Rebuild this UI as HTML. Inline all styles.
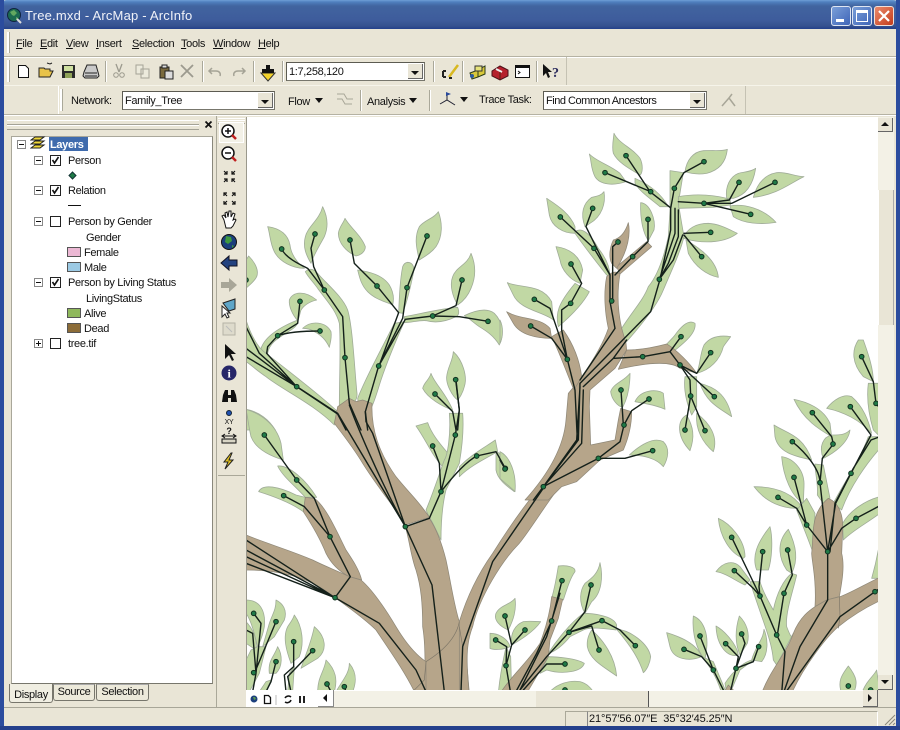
<!DOCTYPE html>
<html><head><meta charset="utf-8"><title>Tree.mxd - ArcMap - ArcInfo</title>
<style>
html,body{margin:0;padding:0;background:#e9e5d6}
#w{position:relative;width:900px;height:730px;overflow:hidden;background:#e9e5d6;font-family:"Liberation Sans",sans-serif;font-size:11px;color:#111;letter-spacing:-.33px}
.a{position:absolute}
.t{position:absolute;white-space:nowrap;line-height:14px;height:14px}
.leaf path{fill:#c1d8a4;stroke:#a0ac98;stroke-width:2.4;stroke-linejoin:round}
.br path{fill:#b6a58a;stroke:#8f8878;stroke-width:2.2;stroke-linejoin:round}
.ln{fill:none;stroke:#14201a;stroke-width:4.2;stroke-linejoin:round;stroke-linecap:round}
.nb{fill:none;stroke:#12301f;stroke-width:17;stroke-linecap:round}
.ng{fill:none;stroke:#1f7a47;stroke-width:11;stroke-linecap:round}
.thin{fill:none;stroke:#7d7668;stroke-width:2}
.combo{position:absolute;background:#fff;border:1px solid #77766c;border-top-color:#5c5b52;border-left-color:#5c5b52;box-sizing:border-box;height:19px}
.cbtn{position:absolute;right:1px;top:1px;bottom:1px;width:15px;background:#e9e5d6;border-right:1px solid #666;border-bottom:1px solid #666;box-sizing:border-box}
.cbtn:after{content:"";position:absolute;left:3px;top:7px;border:4px solid transparent;border-top:4px solid #111;border-bottom:0}
.sep{position:absolute;width:1px;background:#aaa899;border-right:1px solid #fff}
.tri{position:absolute;border:4.5px solid transparent;border-top:5px solid #111;border-bottom:0}
.ex{position:absolute;width:9px;height:9px;border:1px solid #888;box-sizing:border-box;background:#fff}
.ex:before{content:"";position:absolute;left:1px;top:3px;width:5px;height:1px;background:#111}
.ex.p:after{content:"";position:absolute;left:3px;top:1px;width:1px;height:5px;background:#111}
.cb{position:absolute;width:11px;height:11px;border:1px solid #222;box-sizing:border-box;background:#fff}
.sw{position:absolute;width:14px;height:10px;border:1px solid #555;box-sizing:border-box}
.tab{position:absolute;background:#ece9da;border:1px solid #77766c;border-top-color:#aaa;border-radius:0 0 3px 3px;box-sizing:border-box;text-align:center;line-height:15px}
u{text-decoration:underline}
</style></head><body>
<div id="w">

<!-- title bar -->
<div class="a" style="left:0;top:0;width:900px;height:29px;background:linear-gradient(#6f9fd6 0,#4f7fbe 2px,#41649f 6px,#3e5c9c 20px,#35518f 26px,#23408c 29px);border-radius:7px 7px 0 0"></div>
<div class="a" style="left:0;top:0;width:4px;height:730px;background:#2b4c9e"></div>
<div class="a" style="left:896px;top:0;width:4px;height:730px;background:#2b4c9e"></div>
<div class="a" style="left:0;top:726px;width:900px;height:4px;background:#24408c"></div>
<div class="t" style="left:25px;top:9px;color:#f0f2f8;font-size:13px;letter-spacing:.2px">Tree.mxd - ArcMap - ArcInfo</div>
<svg class="a" style="left:5px;top:7px" width="18" height="18" viewBox="0 0 18 18"><circle cx="9" cy="8" r="6.5" fill="#1c6a50" stroke="#10233f"/><path d="M5 5l4-2 3 3-3 3-2-1zM11 10l2 1-2 2z" fill="#62a860"/><path d="M12 12l4 4" stroke="#ddd" stroke-width="2"/></svg>
<!-- window buttons -->
<div class="a" style="left:831px;top:6px;width:20px;height:20px;border:1px solid #dfe6f2;border-radius:3px;box-sizing:border-box;background:linear-gradient(135deg,#7a9fd8,#3f65b8)"><div class="a" style="left:4px;top:12px;width:8px;height:3px;background:#fff"></div></div>
<div class="a" style="left:852px;top:6px;width:20px;height:20px;border:1px solid #dfe6f2;border-radius:3px;box-sizing:border-box;background:linear-gradient(135deg,#7a9fd8,#3f65b8)"><div class="a" style="left:3px;top:3px;width:12px;height:12px;border:1px solid #fff;border-top-width:3px;box-sizing:border-box"></div></div>
<div class="a" style="left:874px;top:6px;width:20px;height:20px;border:1px solid #efe0da;border-radius:3px;box-sizing:border-box;background:linear-gradient(135deg,#e98a6c,#c43c1c)"><svg class="a" style="left:3px;top:3px" width="12" height="12"><path d="M1 1l10 10M11 1L1 11" stroke="#fff" stroke-width="2.2"/></svg></div>

<!-- menu bar -->
<div class="a" style="left:4px;top:29px;width:892px;height:27px;background:#e9e5d6"></div>
<div class="a" style="left:7px;top:32px;width:2px;height:21px;background:#fff;border-right:1px solid #aaa899"></div>
<div class="t" style="left:16px;top:37px"><u>F</u>ile</div>
<div class="t" style="left:40px;top:37px"><u>E</u>dit</div>
<div class="t" style="left:66px;top:37px"><u>V</u>iew</div>
<div class="t" style="left:96px;top:37px"><u>I</u>nsert</div>
<div class="t" style="left:132px;top:37px"><u>S</u>election</div>
<div class="t" style="left:181px;top:37px"><u>T</u>ools</div>
<div class="t" style="left:213px;top:37px"><u>W</u>indow</div>
<div class="t" style="left:258px;top:37px"><u>H</u>elp</div>
<div class="a" style="left:4px;top:56px;width:892px;height:1px;background:#b5b2a3"></div>
<div class="a" style="left:4px;top:57px;width:892px;height:1px;background:#fff"></div>

<!-- toolbar 1 -->
<div class="a" style="left:566px;top:57px;width:1px;height:28px;background:#c5c2b3"></div>
<div class="a" style="left:7px;top:60px;width:2px;height:22px;background:#fff;border-right:1px solid #aaa899"></div>
<div class="a" style="left:4px;top:85px;width:892px;height:1px;background:#f6f4ea"></div>
<svg class="a" style="left:0;top:57px" width="570" height="28" viewBox="0 57 570 28">
<path d="M18.500 65.500h7l3 3v9h-10z" fill="#fff" stroke="#111"/>
<path d="M39 77V68h5l1 1h5v2h3l-3 6z" fill="#e8c34a" stroke="#222"/><path d="M47 63l3 1 2-1" fill="none" stroke="#222"/>
<path d="M62 65h13v13H62z" fill="#2b2b2b"/><path d="M64 66h9v5h-9z" fill="#cfe0a0"/><path d="M65 73h7v5h-7z" fill="#8fa258"/>
<path d="M84 72l3-7h9l2 7 1 4-2 2H85l-2-2z" fill="#c9c9c9" stroke="#222"/><path d="M85 73h12M85 76h12" stroke="#222"/>
<path d="M116 64l3 8m3-8l-3 8" stroke="#9c9a8e" stroke-width="1.300" fill="none"/><circle cx="116" cy="75" r="2.300" fill="none" stroke="#9c9a8e"/><circle cx="122" cy="75" r="2.300" fill="none" stroke="#9c9a8e"/>
<path d="M136 65h7v9h-7zM141 69h8v9h-8z" fill="#eceadc" stroke="#a5a396"/>
<path d="M160 67h9v11h-9z" fill="#7a6a3e" stroke="#222"/><path d="M162 65h5v3h-5z" fill="#ddd" stroke="#222"/><path d="M165 71h8v8h-8z" fill="#dcdcdc" stroke="#222"/>
<path d="M181 65l12 12M193 65l-12 12" stroke="#9c9a8e" stroke-width="1.800"/>
<path d="M212 68l-3 3 3 3m-3-3h7c3 0 5 2 4 5" fill="none" stroke="#a5a396" stroke-width="1.500"/>
<path d="M242 68l3 3-3 3m3-3h-7c-3 0-5 2-4 5" fill="none" stroke="#a5a396" stroke-width="1.500"/>
<path d="M261 73l7 8 7-8z" fill="#f2d22c" stroke="#333"/><path d="M266 65h4v4h4v4h-12v-4h4z" fill="#111"/>
<path d="M449 77l9-12" stroke="#d8b820" stroke-width="2.500"/><path d="M443 71h3M443 77h3M449 78h3M443 71v6" stroke="#222" stroke-width="2"/>
<path d="M470 73l8-3v7l-6 2zM478 70l7-4v8l-7 3z" fill="#d8c83a" stroke="#2a3a18"/><path d="M475 66h7v5h-7z" fill="#e6e27a" stroke="#333"/><circle cx="472" cy="76" r="2" fill="#2c5aa0"/>
<path d="M492 71l8-5 8 4v6l-8 4-8-4z" fill="#b5202c" stroke="#4a1018"/><path d="M496 69l6 3" stroke="#eee" stroke-width="2"/><path d="M500 72v7" stroke="#521" />
<path d="M515.500 65.500h14v12h-14z" fill="#fff" stroke="#111"/><path d="M515 65h15v3h-15z" fill="#111"/><path d="M518 71l2 1.500-2 1.500" fill="none" stroke="#111"/>
<path d="M543 64v12l3-3 2 5 2-1-2-5h4z" fill="#111"/><text x="552" y="77" font-family="Liberation Serif,serif" font-weight="bold" font-size="14" fill="#2a2a5c">?</text>
</svg>
<div class="sep" style="left:105px;top:61px;height:21px"></div>
<div class="sep" style="left:202px;top:61px;height:21px"></div>
<div class="sep" style="left:253px;top:61px;height:21px"></div>
<div class="sep" style="left:282px;top:61px;height:21px"></div>
<div class="sep" style="left:433px;top:61px;height:21px"></div>
<div class="sep" style="left:462px;top:61px;height:21px"></div>
<div class="sep" style="left:536px;top:61px;height:21px"></div>
<div class="combo" style="left:286px;top:62px;width:139px"><div class="t" style="left:2px;top:2px">1:7,258,120</div><div class="cbtn"></div></div>

<!-- toolbar 2 -->
<div class="a" style="left:58px;top:86px;width:1px;height:28px;background:#fff"></div>
<div class="a" style="left:745px;top:86px;width:1px;height:28px;background:#c5c2b3"></div>
<div class="a" style="left:60px;top:89px;width:2px;height:22px;background:#fff;border-right:1px solid #aaa899"></div>
<div class="t" style="left:71px;top:94px">Network:</div>
<div class="combo" style="left:122px;top:91px;width:153px"><div class="t" style="left:2px;top:2px">Family_Tree</div><div class="cbtn"></div></div>
<div class="t" style="left:288px;top:95px">Flow</div><div class="tri" style="left:315px;top:98px"></div>
<svg class="a" style="left:336px;top:91px" width="18" height="18"><path d="M1 3h7l3 5h6M1 8h5l3 5h7" fill="none" stroke="#a8a698"/></svg>
<div class="sep" style="left:360px;top:90px;height:21px"></div>
<div class="t" style="left:367px;top:95px">Analysis</div><div class="tri" style="left:409px;top:98px"></div>
<div class="sep" style="left:429px;top:90px;height:21px"></div>
<svg class="a" style="left:438px;top:91px" width="20" height="18"><path d="M2 13l7-4 8 5M9 9V3" stroke="#223" fill="none"/><path d="M8 1l5 2-5 2z" fill="#2a4a9c"/></svg>
<div class="tri" style="left:460px;top:97px"></div>
<div class="t" style="left:479px;top:93px">Trace Task:</div>
<div class="combo" style="left:543px;top:91px;width:164px"><div class="t" style="left:2px;top:2px;letter-spacing:-.48px">Find Common Ancestors</div><div class="cbtn"></div></div>
<svg class="a" style="left:720px;top:92px" width="17" height="17"><path d="M2 14L9 6l6 8M9 6l3-4" stroke="#a8a698" stroke-width="1.500" fill="none"/></svg>
<div class="a" style="left:4px;top:114px;width:892px;height:1px;background:#b5b2a3"></div>
<div class="a" style="left:4px;top:115px;width:892px;height:1px;background:#fff"></div>

<!-- TOC -->
<div class="a" style="left:7px;top:120px;width:192px;height:3px;border-top:1px solid #fff;border-bottom:1px solid #a5a396"></div>
<div class="a" style="left:7px;top:125px;width:192px;height:3px;border-top:1px solid #fff;border-bottom:1px solid #a5a396"></div>
<svg class="a" style="left:204px;top:120px" width="9" height="9"><path d="M1.500 1.500l6 6M7.500 1.500l-6 6" stroke="#111" stroke-width="1.800"/></svg>
<div class="a" style="left:11px;top:136px;width:202px;height:548px;background:#fff;border:1px solid #a9a79a;border-right-color:#8a887c;border-bottom-color:#77766c;box-sizing:border-box"></div>
<div class="a" style="left:216px;top:116px;width:1px;height:592px;background:#aaa899"></div>
<div class="ex" style="left:17px;top:140px"></div>
<svg class="a" style="left:30px;top:136px" width="16" height="15"><path d="M1 4l4-3h9l-4 3zM1 8l4-3h9l-4 3zM1 12l4-3h9l-4 3z" fill="#f0d838" stroke="#222"/></svg>
<div class="a" style="left:49px;top:137px;width:39px;height:14px;background:#3f6bad"></div>
<div class="t" style="left:50px;top:138px;color:#fff;font-weight:bold">Layers</div>

<div class="ex" style="left:34px;top:156px"></div><div class="cb" style="left:50px;top:155px"><svg width="9" height="9" style="display:block"><path d="M1.500 4l2 3 4-6" fill="none" stroke="#111" stroke-width="1.600"/></svg></div>
<div class="t" style="left:68px;top:154px">Person</div>
<svg class="a" style="left:68px;top:171px" width="9" height="9"><path d="M4.500 1l3.500 3.500-3.500 3.500-3.500-3.500z" fill="#1f7a47" stroke="#133"/></svg>
<div class="ex" style="left:34px;top:186px"></div><div class="cb" style="left:50px;top:185px"><svg width="9" height="9" style="display:block"><path d="M1.500 4l2 3 4-6" fill="none" stroke="#111" stroke-width="1.600"/></svg></div>
<div class="t" style="left:68px;top:184px">Relation</div>
<div class="a" style="left:68px;top:205px;width:13px;height:1px;background:#111"></div>
<div class="ex" style="left:34px;top:217px"></div><div class="cb" style="left:50px;top:216px"></div>
<div class="t" style="left:68px;top:215px">Person by Gender</div>
<div class="t" style="left:86px;top:231px">Gender</div>
<div class="sw" style="left:67px;top:247px;background:#ecb8d4"></div><div class="t" style="left:84px;top:246px">Female</div>
<div class="sw" style="left:67px;top:262px;background:#9ccae4"></div><div class="t" style="left:84px;top:261px">Male</div>
<div class="ex" style="left:34px;top:278px"></div><div class="cb" style="left:50px;top:277px"><svg width="9" height="9" style="display:block"><path d="M1.500 4l2 3 4-6" fill="none" stroke="#111" stroke-width="1.600"/></svg></div>
<div class="t" style="left:68px;top:276px">Person by Living Status</div>
<div class="t" style="left:86px;top:292px">LivingStatus</div>
<div class="sw" style="left:67px;top:308px;background:#8fb85c"></div><div class="t" style="left:84px;top:307px">Alive</div>
<div class="sw" style="left:67px;top:323px;background:#8c6c38"></div><div class="t" style="left:84px;top:322px">Dead</div>
<div class="ex p" style="left:34px;top:339px"></div><div class="cb" style="left:50px;top:338px"></div>
<div class="t" style="left:68px;top:337px">tree.tif</div>

<!-- tabs -->
<div class="tab" style="left:9px;top:684px;width:44px;height:19px;background:#f0eee2;border-top:0;line-height:22px;z-index:2">Display</div>
<div class="tab" style="left:53px;top:684px;width:42px;height:17px">Source</div>
<div class="tab" style="left:96px;top:684px;width:53px;height:17px">Selection</div>

<!-- vertical toolbar -->
<div class="a" style="left:218px;top:118px;width:27px;height:1px;background:#fff"></div>
<div class="a" style="left:218px;top:120px;width:27px;height:2px;border-top:1px solid #fff;border-bottom:1px solid #aaa899"></div>
<div class="a" style="left:219px;top:122px;width:25px;height:21px;background:#f3f1e7;border:1px solid #fff;box-sizing:border-box"></div>
<div class="a" style="left:218px;top:475px;width:27px;height:1px;background:#aaa899"></div>
<svg class="a" style="left:218px;top:118px" width="27" height="360" viewBox="218 118 27 360">
<circle cx="228" cy="131" r="6" fill="#fff" stroke="#111" stroke-width="1.500"/><path d="M225 131h6M228 128v6" stroke="#111" stroke-width="1.500"/><path d="M232 135l4 4" stroke="#c02020" stroke-width="2.500"/>
<circle cx="228" cy="153" r="6" fill="#fff" stroke="#111" stroke-width="1.500"/><path d="M225 153h6" stroke="#111" stroke-width="1.500"/><path d="M232 157l4 4" stroke="#c02020" stroke-width="2.500"/>
<path d="M224 171l3 3m0-3v3h-3M235 171l-3 3m0-3v3h3M224 182l3-3m0 3v-3h-3M235 182l-3-3m0 3v-3h3" stroke="#111" fill="none" stroke-width="1.200"/>
<path d="M227 196l-3-3m0 3v-3h3M232 196l3-3m0 3v-3h-3M227 201l-3 3m0-3v3h3M232 201l3 3m0-3v3h-3" stroke="#111" fill="none" stroke-width="1.200"/>
<path d="M224 220l-2-4 2-1 2 3-1-5 2-1 1 5 1-6 2 0 0 6 2-4 2 1-2 6 2-1 1 1-3 6-2 2h-5z" fill="#fff" stroke="#111"/>
<circle cx="229" cy="242" r="7.500" fill="#1c3f7c" stroke="#111"/><path d="M226 236l5 1 1 4-4 3-3-2zM232 245l2 1-2 2z" fill="#3f9a40"/>
<path d="M221 263l8-7v4h8v6h-8v4z" fill="#23427f" stroke="#112"/>
<path d="M237 285l-8-7v4h-8v6h8v4z" fill="#a8a698"/>
<path d="M223 303l12-4v10l-6 2z" fill="#5fa6c8" stroke="#222"/><path d="M222 306v11l3-3 2 4 2-1-2-4h3z" fill="#fff" stroke="#222"/>
<path d="M223 323h12v12h-12z" fill="#dedbcc" stroke="#b5b3a6"/><path d="M226 326l6 6" stroke="#bbb"/>
<path d="M225 344v15l4-4 3 6 2-1-3-6h5z" fill="#111"/>
<circle cx="229" cy="373" r="7.500" fill="#262668"/><text x="229" y="377.500" text-anchor="middle" font-family="Liberation Serif,serif" font-size="12" font-weight="bold" fill="#fff">i</text>
<path d="M222 402l1-7 2-5h3v5h3v-5h3l2 5 1 7h-6v-4h-3v4z" fill="#111"/>
<circle cx="229" cy="413" r="2.500" fill="#2050b0" stroke="#123"/><text x="229" y="424" text-anchor="middle" font-size="7" fill="#111">XY</text>
<path d="M222 439h14v4h-14zM222 436h14" stroke="#111" fill="#d8d5c5"/><path d="M225 434l-3 2 3 2M233 434l3 2-3 2" stroke="#111" fill="none"/><text x="229" y="434" text-anchor="middle" font-size="9" font-weight="bold" fill="#111">?</text>
<path d="M231 453l-7 9h4l-3 7 8-9h-4l3-7z" fill="#e0c020" stroke="#222"/>
</svg>

<!-- map -->
<svg class="a" style="left:0;top:0" width="900" height="730" viewBox="0 0 900 730">
<defs>
<clipPath id="mc"><rect x="246" y="117" width="632" height="573"/></clipPath>
<path id="n9" d="M107,177h0M207,132h0M235,300h0M312,150h0M393,288h0M297,503h0M543,138h0M483,293h0M648,270h0M560,378h0M726,394h0M398,528h0M162,334h0M95,437h0M222,423h0M152,590h0M567,612h0M629,569h0M0,270h0"/>
<path id="n7" d="M55,165h0M152,300h0M113,347h0M252,470h0M267,653h0M478,440h0M585,335h0M560,198h0M692,228h0M778,265h0M628,165h0M23,700h0M90,725h0M143,785h0M200,812h0M90,845h0M23,878h0M243,912h0M295,920h0"/>
<path id="n8" d="M378,107h0M315,158h0M452,215h0M612,125h0M523,205h0M612,250h0M717,187h0M825,187h0M752,283h0M632,337h0M605,410h0M478,478h0M444,298h0M398,410h0M278,265h0M181,291h0M282,385h0M354,366h0M335,543h0M213,432h0M212,550h0M103,538h0M92,618h0M202,718h0M130,1100h0M295,1015h0M458,992h0M372,915h0M363,810h0M447,837h0M428,710h0M543,650h0M632,698h0M540,735h0M643,830h0M572,828h0M555,930h0M615,932h0M15,1047h0"/>
<path id="n10" d="M457,218h0M519,312h0M397,305h0M480,428h0M571,200h0M573,400h0M402,412h0M354,472h0M440,555h0M503,635h0M588,535h0M605,50h0M648,190h0M645,755h0M215,592h0M223,692h0M308,635h0M383,630h0M372,760h0M300,768h0M350,885h0M120,888h0M72,928h0M160,990h0M245,882h0M197,911h0M296,920h0M228,985h0M565,1038h0M632,1050h0"/>
<path id="n11" d="M45,198h0M105,240h0M17,270h0M48,347h0M216,92h0M185,213h0M303,105h0M237,247h0M336,212h0M436,287h0M327,300h0M225,342h0M225,420h0"/>
</defs>
<rect x="246" y="117" width="632" height="573" fill="#fff"/>
<g clip-path="url(#mc)">
<!-- FILLS -->
<g transform="translate(246,190) scale(.33333)"><g class="leaf">
<path d="M65,110C100,115 125,130 132,165C135,190 150,215 175,235C140,235 100,215 85,185C72,160 72,130 65,110Z"/>
<path d="M230,50C245,80 248,110 235,140C222,165 205,190 195,220C180,195 170,170 178,140C185,110 220,90 230,50Z"/>
<path d="M297,85C310,110 345,135 358,170C358,185 345,195 330,198C300,185 278,160 277,130C280,110 292,100 297,85Z"/>
<path d="M335,240C370,245 410,255 430,285C442,305 445,325 440,345C420,335 390,330 365,305C345,285 340,260 335,240Z"/>
<path d="M577,65C590,100 590,140 570,170C555,190 535,200 520,210C510,170 505,140 520,110C535,90 565,85 577,65Z"/>
<path d="M485,217C500,218 505,230 503,245C495,285 485,330 470,370L458,368C460,320 462,270 470,230C473,222 478,218 485,217Z"/>
<path d="M675,190C690,225 690,260 675,295C665,320 650,335 635,345C620,320 610,285 620,260C630,230 665,225 675,190Z"/>
<path d="M475,380C520,372 590,355 635,352C640,365 640,375 630,380C600,395 570,400 540,392C520,390 495,398 475,398Z"/>
<path d="M655,377C680,365 720,350 745,370C770,395 775,435 760,465C745,440 725,425 700,410C685,400 670,385 655,377Z"/>
<path d="M178,245C190,232 205,238 215,250C240,280 290,320 305,360C320,410 325,530 333,610C335,630 320,645 305,650L280,650C280,560 285,460 280,400C270,360 240,330 215,295C205,280 185,260 178,245Z"/>
<path d="M335,625C360,560 410,470 445,400L475,395C455,440 425,510 405,570C395,600 385,640 370,665L340,665Z"/>
<path d="M130,330C140,305 175,300 212,330C190,335 175,345 165,360C160,375 160,385 155,392C140,375 128,350 130,330Z"/>
<path d="M170,415C195,390 240,395 255,425C258,445 252,460 250,472C240,450 225,435 205,425C195,418 180,415 170,415Z"/>
<path d="M42,490C45,455 80,420 155,390C158,400 150,410 135,420C105,440 70,455 65,490Z"/>
<path d="M0,390C10,420 30,470 60,490C110,530 230,620 280,670L265,705C200,640 110,600 60,560C30,540 10,520 0,515Z"/>
<path d="M8,198C25,215 40,240 32,260C25,275 10,285 0,295L0,210Z"/>
<path d="M0,658C40,665 70,690 88,720L0,720Z"/>
<path d="M555,550C565,580 600,610 620,660C590,650 545,625 530,595C535,575 550,570 555,550Z"/>
<path d="M622,485C650,510 665,560 655,590C650,610 640,625 635,630C620,620 600,585 602,560C605,530 620,515 622,485Z"/>
</g></g>
<g transform="translate(246,380) scale(.33333)"><g class="leaf">
<path d="M0,88C40,100 90,130 105,190L112,240C80,230 30,210 15,170C8,140 5,110 0,88Z"/>
<path d="M95,258C130,255 180,300 212,352L178,352C150,320 110,290 95,258Z"/>
<path d="M38,335C50,310 100,320 150,345L178,352L172,395C130,365 70,345 38,335Z"/>
<path d="M510,138L545,128C560,170 590,200 610,225L590,260C560,230 540,180 510,138Z"/>
<path d="M540,390C565,330 580,280 595,240C605,225 615,160 610,100L650,100C655,160 645,220 640,250L600,330C590,370 585,420 585,480C570,450 560,425 550,412Z"/>
<path d="M640,260C680,220 720,200 748,180L755,215C710,240 670,260 640,290Z"/>
<path d="M750,215C790,230 810,270 805,335C785,320 755,300 750,270Z"/>
<path d="M0,660C40,660 60,690 55,740C50,770 40,790 35,800C25,760 15,720 0,700Z"/>
<path d="M90,660C110,670 125,690 115,720L85,770L50,800L70,730C80,700 90,690 90,660Z"/>
<path d="M0,725C20,745 35,780 30,810L0,790Z"/>
<path d="M145,705C170,740 175,790 160,830L135,850C120,810 110,770 125,740C135,725 140,720 145,705Z"/>
<path d="M205,740C240,770 245,810 215,835L165,865C180,820 195,790 205,740Z"/>
<path d="M95,800C110,825 110,860 90,880L70,880C65,840 85,830 95,800Z"/>
<path d="M240,840C270,870 275,900 265,935L215,935C215,890 235,875 240,840Z"/>
<path d="M310,850C335,880 330,910 320,935L270,935C290,900 310,880 310,850Z"/>
<path d="M15,810L35,800L60,800L40,880L10,935L0,935L0,840Z"/>
<path d="M60,905L75,900L60,935L40,935Z"/>
<path d="M130,880L145,860L140,935L125,935Z"/>
</g></g>
<g transform="translate(500,120) scale(.33333)"><g class="leaf">
<path d="M342,40C355,70 400,85 420,115C430,135 428,160 420,165C395,150 355,130 340,100C335,80 340,60 342,40Z"/>
<path d="M268,102C290,125 330,135 360,160L378,185C340,198 300,195 285,170C272,145 275,125 268,102Z"/>
<path d="M682,88C678,125 660,150 620,160C590,165 570,160 555,155C560,120 580,95 610,92C635,90 665,95 682,88Z"/>
<path d="M405,175C440,190 480,215 505,260L480,260C450,235 420,215 405,190Z"/>
<path d="M510,152L550,158L535,250L545,310L552,350C540,400 515,450 490,510C470,560 420,620 375,670L365,625C400,570 430,540 445,500C470,470 490,420 505,350L510,270Z"/>
<path d="M767,145C760,190 740,225 700,235L680,235C675,200 690,170 715,160C735,155 755,155 767,145Z"/>
<path d="M912,170C870,190 830,225 760,232C770,195 790,165 830,158C860,155 885,170 912,170Z"/>
<path d="M535,230C590,220 650,225 690,238L692,255L640,262L536,265Z"/>
<path d="M690,258C730,250 790,265 828,307C780,315 730,310 700,290L690,258Z"/>
<path d="M712,340C680,365 620,375 550,355C560,325 590,310 625,310C660,312 690,330 712,340Z"/>
<path d="M558,360C600,385 650,420 655,472C620,465 585,440 565,400Z"/>
<path d="M422,248C450,250 468,300 462,330L445,362C430,340 420,300 422,248Z"/>
<path d="M140,235C170,255 210,280 225,320L225,340C190,340 155,320 148,285Z"/>
<path d="M312,215C318,250 305,290 270,310L255,320C240,280 250,250 275,232C295,228 305,225 312,215Z"/>
<path d="M225,335C245,320 270,340 295,385C315,410 330,440 330,470L320,465C300,440 260,390 225,340Z"/>
<path d="M168,380C205,385 240,405 248,450L240,490C210,480 185,450 180,420Z"/>
<path d="M22,488C60,505 125,490 155,545L160,600C130,575 60,570 40,525Z"/>
<path d="M225,490L268,515C250,550 210,590 175,620C165,580 175,550 225,490Z"/>
<path d="M585,610C570,600 550,610 525,645C510,665 490,675 495,690L520,695C550,670 590,640 585,610Z"/>
<path d="M692,650C660,645 630,650 612,675C600,700 600,740 590,760C630,750 660,720 670,680C680,665 685,660 692,650Z"/>
<path d="M600,790C640,800 680,820 695,890C660,865 620,850 600,790Z"/>
<path d="M555,770L590,770L590,860L575,885C560,850 550,810 555,770Z"/>
<path d="M560,885C530,900 530,950 570,992C585,950 580,920 560,885Z"/>
<path d="M590,880C630,910 655,950 640,995C610,970 585,930 590,880Z"/>
<path d="M390,760C370,785 340,790 332,815C335,840 355,860 368,862C385,830 390,790 390,760Z"/>
<path d="M495,868L490,820C470,805 420,810 405,845C430,850 470,855 495,868Z"/>
<path d="M388,1005C420,975 460,950 490,965C510,985 505,1015 490,1040C470,1015 430,1005 388,1005Z"/>
<path d="M0,995C30,1010 50,1060 45,1115C30,1100 10,1085 0,1075Z"/>
<path d="M0,600C10,620 10,650 0,670Z"/>
</g></g>
<g transform="translate(660,340) scale(.33333)"><g class="leaf">
<path d="M402,178C440,185 490,205 510,250L515,290C480,270 430,240 402,178Z"/>
<path d="M500,205C520,180 550,160 575,170C610,200 625,240 635,280C600,240 550,215 500,205Z"/>
<path d="M342,255C380,280 430,285 455,360C410,350 355,340 345,290Z"/>
<path d="M570,270C565,310 520,340 490,355C475,320 490,290 515,285C540,285 555,285 570,270Z"/>
<path d="M365,350C400,355 435,390 432,440L430,490C395,470 370,410 365,350Z"/>
<path d="M282,440C330,440 390,450 425,500L410,505C370,505 320,490 282,440Z"/>
<path d="M465,372L490,375L510,475L490,490L472,465C475,430 465,400 465,372Z"/>
<path d="M410,510L440,475L465,520L460,640L445,600Z"/>
<path d="M520,490C545,440 600,360 625,290L660,290L660,325C620,370 570,440 545,510Z"/>
<path d="M548,550C570,510 620,480 660,470L660,520C620,550 580,570 550,600Z"/>
<path d="M625,130L660,130L660,290L640,270C625,220 620,170 625,130Z"/>
<path d="M595,0C575,30 575,70 610,110L640,125C640,80 620,30 610,0Z"/>
<path d="M660,600L660,715L635,715C645,680 654,640 660,600Z"/>
<path d="M175,535C210,550 255,600 255,650L250,655C210,640 180,590 175,535Z"/>
<path d="M330,560C340,600 335,660 325,690L290,690C275,650 290,610 330,560Z"/>
<path d="M385,568C410,620 415,660 395,700L380,690C360,660 345,610 385,568Z"/>
<path d="M168,695C190,665 220,660 240,680L270,720L255,735C230,725 200,700 168,695Z"/>
<path d="M270,725L300,725C310,760 340,810 340,810C350,760 370,720 395,700L410,705C400,750 375,820 380,860C390,885 395,900 400,880L350,975L340,960C335,900 310,850 270,725Z"/>
<path d="M100,828C130,840 145,880 140,925L135,960C110,930 95,880 100,828Z"/>
<path d="M20,878C60,890 110,910 125,950C90,965 40,960 30,920Z"/>
<path d="M238,828C260,850 270,880 262,910L240,945C225,910 225,870 238,828Z"/>
<path d="M168,858C190,870 230,910 235,945C205,955 170,920 168,858Z"/>
<path d="M312,868C325,900 325,940 305,965L275,960C285,920 310,900 312,868Z"/>
<path d="M125,950L160,965L200,1060L185,1060C170,1010 150,980 125,950Z"/>
<path d="M195,1030C220,990 260,960 280,960L240,990L210,1060L200,1060Z"/>
<path d="M565,978C590,1010 595,1030 580,1060L545,1060C530,1020 550,1000 565,978Z"/>
<path d="M650,990L660,1060L605,1060C620,1020 640,1010 650,990Z"/>
</g></g>
<g transform="translate(490,550) scale(.33333)"><g class="leaf">
<path d="M75,145C80,180 70,210 55,240C30,230 10,210 18,190C30,165 60,165 75,145Z"/>
<path d="M152,215C135,240 100,265 65,285C60,250 75,225 100,215C120,212 135,215 152,215Z"/>
<path d="M0,250C30,250 55,270 60,290C40,300 10,300 0,295Z"/>
<path d="M48,290L62,320L65,430L25,430C30,370 40,330 48,290Z"/>
<path d="M205,48C230,45 258,50 255,65C240,85 230,120 220,150L185,145C195,110 200,80 205,48Z"/>
<path d="M175,310C200,270 240,220 280,190C300,190 370,195 380,225L378,240C340,235 300,230 280,240L240,260C220,285 195,305 175,310Z"/>
<path d="M330,38C340,80 335,130 305,155L285,190C265,155 270,120 285,100C305,85 325,70 330,38Z"/>
<path d="M380,238C420,240 475,280 482,320C480,340 470,360 460,368C445,320 415,280 380,238Z"/>
<path d="M305,240C340,270 375,320 380,378C340,350 300,330 292,290C290,270 295,255 305,240Z"/>
<path d="M175,320C200,320 260,325 283,340C275,365 220,375 170,360L150,370Z"/>
<path d="M175,430C200,400 240,390 270,395C290,400 305,415 312,430Z"/>
</g></g>
<!-- BROWN -->
<g transform="translate(246,380) scale(.33333)"><g class="br">
<path d="M275,80L310,55L330,65L350,60L378,70C375,150 400,220 450,290C490,340 520,365 550,412L478,435C450,385 400,330 350,250C320,200 280,150 265,130Z"/>
<path d="M478,440L550,415C570,445 585,480 600,540C615,610 625,680 640,725C650,760 665,850 670,945L540,945C535,860 540,800 530,740C530,670 525,620 510,570C495,530 490,480 478,440Z"/>
<path d="M640,725C660,660 690,590 740,520C790,440 840,370 890,310L960,195L960,295C900,370 860,440 820,490C770,540 700,650 680,740C660,790 660,840 670,945L640,945Z"/>
<path d="M178,352L205,355C240,380 270,450 300,510C320,540 340,570 347,600L310,590C280,575 255,550 240,520C220,470 195,430 172,395Z"/>
<path d="M0,465C60,490 130,510 200,540C240,560 280,575 310,590L345,600C380,630 420,690 450,740C480,790 510,825 540,845L540,945L510,945C480,880 430,810 390,750C350,710 290,670 250,640C180,590 100,570 0,570Z"/>
</g>
<path class="thin" d="M640,725C630,780 580,820 540,845M540,845L535,900L500,935M640,740L650,800"/></g>
<g transform="translate(500,120) scale(.33333)"><g class="br">
<path d="M320,470C330,460 345,450 360,462C350,520 355,580 365,625L378,670L380,690L345,745L270,810L268,860L272,975L345,960L355,900L362,865L395,875C395,920 385,955 370,990L300,1020L230,1085L185,1100L145,1140L75,1140C120,1090 190,1000 198,900L205,820L222,800L245,770C280,720 310,670 325,625C315,580 310,520 320,470Z"/>
<path d="M155,650L190,630C225,680 240,730 245,770L222,810C200,760 180,700 155,650Z"/>
<path d="M350,440L440,365L455,380L360,462Z"/>
<path d="M340,360C360,355 375,340 385,308C392,340 385,390 350,445L335,430C325,410 330,380 340,360Z"/>
<path d="M380,690C420,690 470,680 500,672C530,690 570,730 590,760L540,745C510,720 430,730 355,748Z"/>
<path d="M20,575C60,600 120,590 150,625L155,655C110,655 60,645 40,610Z"/>
</g></g>
<g transform="translate(660,340) scale(.33333)"><g class="br">
<path d="M505,475C540,490 550,530 548,570L545,640C555,680 545,730 538,770L500,780L465,800C470,720 455,660 455,640C462,580 450,520 505,475Z"/>
<path d="M660,712L660,782C600,810 560,840 535,860C500,890 430,980 395,1060L305,1060C330,990 380,940 400,880C420,830 450,810 465,800L500,780L540,770C570,760 620,730 660,712Z"/>
<path d="M190,1060L205,1035L230,1060Z"/>
</g><path class="thin" d="M538,770L540,830L535,865"/></g>
<g transform="translate(490,550) scale(.33333)"><g class="br">
<path d="M185,140L218,148L205,205L180,270L175,320L110,430L30,430C70,370 110,340 150,280C165,240 180,190 185,140Z"/>
</g></g>
<!-- LINES -->
<g transform="translate(246,190) scale(.33333)">
<path class="ln" d="M107,177C120,205 165,225 185,235L235,300M207,132L195,175L203,230L235,300L290,380L297,503L310,640L345,720M312,150L325,220L393,288L458,368L400,525M543,138L483,293L470,385L398,528L358,665L365,720M648,270L630,347L560,378L478,388L398,528M560,378L640,380L726,394M162,334L155,400L95,437L65,470L62,490L152,590M95,437C130,425 180,423 222,423M0,410L40,490L152,590M0,475L152,590M0,500L152,590M152,590L275,672L300,720M567,612L620,665L630,720M629,569L640,660L635,720"/>
</g>
<g transform="translate(246,380) scale(.33333)">
<path class="ln" d="M153,20L275,100L370,260L478,440M310,75C330,130 400,300 478,440M358,95L360,125L380,160L478,440M478,440L550,415L585,335L628,165L640,90L630,0M478,440L510,510L558,615L595,935M585,335L580,250L560,198M585,335C620,290 660,245 692,228L750,215L778,265M55,165L152,300L205,355L252,470L313,590L267,653M113,347L175,380L252,470M0,480L267,653M0,510L267,653M0,530L267,653M0,550L267,653M267,653L400,730L510,870L540,935M895,320L740,545L650,800L645,935M23,700L45,730L30,880L20,935M90,725L25,880M0,750L20,760L30,880M143,785V860L115,885L120,935M200,812L125,890L135,935M90,845L75,905L60,935M243,912L255,935M295,920L300,935"/>
</g>
<g transform="translate(500,120) scale(.33333)">
<path class="ln" d="M378,107L450,215L510,262M315,158L452,215M612,125L552,158L523,205L512,265L512,330L480,478L452,575L240,790L235,960L130,1100L100,1140M525,265L525,340L478,478M548,345L520,420L478,478M535,270L535,350L505,430L478,478M632,337L552,340M605,410L552,345M825,187L695,250L612,250M717,187L688,240L612,250M752,283L612,250M612,250L535,245M444,298V365L398,410L345,465M278,265L258,320L330,465V545L345,625M181,291L282,385L330,465M354,366L338,380V545M345,625L240,780M213,432L245,490L212,550L185,570V630L202,718M103,538L150,565L202,718M92,618L155,655L202,718L225,810L232,960L130,1100M240,800L230,960L130,1100M250,810L245,970L130,1100M130,1100L295,1015L360,965L372,915L395,872L447,837M363,810L370,915M295,1015L375,1015L458,992M343,715L428,710L510,695L543,650M380,660L340,715L250,800M428,710L510,695L540,735L590,760L632,698M540,735L643,830M540,735L570,780L572,828L555,930M572,828L615,932M15,1047L0,1020"/>
</g>
<g transform="translate(660,340) scale(.33333)">
<path class="ln" d="M457,218L515,290L520,312L487,355L480,428L503,635M397,305C440,340 480,390 480,428M571,200L633,285L573,400L527,490L503,635M660,290L633,300L580,385L525,490L510,635M402,412L440,555L503,635M354,472L410,505L440,555M660,497L588,535L545,565L503,635M605,50L640,125L648,190L660,205M503,635V780L420,920L370,1060M660,745L645,755L540,830L375,1060M215,592L300,768L350,885L375,935L365,1060M223,692L280,745L300,768M308,635L297,740L300,768M383,630L397,705L372,760L352,885M120,888L160,990L195,1060M72,928L125,950L160,990M245,882L255,910L228,985L210,1060M197,911L235,950L228,985M296,920L280,965L228,985"/>
</g>
<g transform="translate(490,550) scale(.33333)">
<path class="ln" d="M45,198L65,285L48,347L62,430M105,240L65,285L48,347M17,270L50,290L48,347M216,92L185,213L140,310L75,430M210,130L170,260L90,420M303,105L285,185L237,247L170,320L90,420M237,247L305,228L327,300M237,247L336,212L390,240L436,287M225,342L170,342L100,420"/>
</g>
<!-- NODES -->
<g transform="translate(246,190) scale(.33333)"><use href="#n9" class="nb"/><use href="#n9" class="ng"/></g>
<g transform="translate(246,380) scale(.33333)"><use href="#n7" class="nb"/><use href="#n7" class="ng"/></g>
<g transform="translate(500,120) scale(.33333)"><use href="#n8" class="nb"/><use href="#n8" class="ng"/></g>
<g transform="translate(660,340) scale(.33333)"><use href="#n10" class="nb"/><use href="#n10" class="ng"/></g>
<g transform="translate(490,550) scale(.33333)"><use href="#n11" class="nb"/><use href="#n11" class="ng"/></g>
</g>
<rect x="246" y="117" width="1" height="573" fill="#9a988c"/>
</svg>

<!-- scrollbars -->
<div class="a" style="left:878px;top:117px;width:16px;height:573px;background:#f3f1e6"></div>
<div class="a" style="left:878px;top:190px;width:16px;height:135px;background:#e9e5d6;border-right:1px solid #aaa;border-left:1px solid #fff;box-sizing:border-box"></div>
<div class="a" style="left:878px;top:118px;width:15px;height:14px;background:#e9e5d6;border-right:1px solid #666;border-bottom:1px solid #666;box-sizing:border-box"><div class="a" style="left:3px;top:4px;border:4px solid transparent;border-bottom:4px solid #111;border-top:0"></div></div>
<div class="a" style="left:878px;top:675px;width:15px;height:15px;background:#e9e5d6;border-right:1px solid #666;border-bottom:1px solid #666;box-sizing:border-box"><div class="a" style="left:3px;top:5px;border:4px solid transparent;border-top:4px solid #111;border-bottom:0"></div></div>
<div class="a" style="left:246px;top:690px;width:632px;height:17px;background:#fff"></div>
<div class="a" style="left:334px;top:691px;width:544px;height:16px;background:#f3f1e6"></div>
<div class="a" style="left:536px;top:691px;width:113px;height:16px;background:#e9e5d6;border-right:1px solid #555;box-sizing:border-box"></div>
<div class="a" style="left:318px;top:690px;width:16px;height:17px;background:#fff;border-right:1px solid #888;border-bottom:1px solid #888;box-sizing:border-box"><div class="a" style="left:5px;top:4px;border:4px solid transparent;border-right:4px solid #111;border-left:0"></div></div>
<div class="a" style="left:863px;top:690px;width:15px;height:17px;background:#e9e5d6;border-right:1px solid #666;border-bottom:1px solid #666;box-sizing:border-box"><div class="a" style="left:5px;top:4px;border:4px solid transparent;border-left:4px solid #111;border-right:0"></div></div>
<svg class="a" style="left:248px;top:691px" width="60" height="15"><circle cx="6" cy="8" r="3.500" fill="#1c3f7c"/><path d="M5 6l2 0 1 2-2 1z" fill="#5a9a50"/><path d="M16.500 4.500h4l2 2v6h-6z" fill="#fff" stroke="#111" stroke-width="1.300"/><path d="M28 4v10" stroke="#bbb"/><path d="M37 7a4 4 0 0 1 6-1M43 9a4 4 0 0 1-6 2" stroke="#111" fill="none" stroke-width="1.500"/><path d="M51 5h2v7h-2zM55 5h2v7h-2z" fill="#222"/></svg>

<!-- status bar -->
<div class="a" style="left:4px;top:707px;width:892px;height:1px;background:#a8a698"></div>
<div class="a" style="left:565px;top:711px;width:22px;height:15px;border-left:1px solid #aaa899;border-top:1px solid #aaa899;box-sizing:border-box"></div>
<div class="a" style="left:587px;top:711px;width:291px;height:15px;border-left:1px solid #888;border-top:1px solid #aaa899;border-right:1px solid #fff;box-sizing:border-box"></div>
<div class="t" style="left:589px;top:712px;font-size:11px;letter-spacing:-.1px;white-space:pre">21°57′56.07″E  35°32′45.25″N</div>
<svg class="a" style="left:884px;top:714px" width="12" height="12"><path d="M11 1L1 11M11 5L5 11M11 9L9 11" stroke="#8a887a"/></svg>
</div>
</body></html>
